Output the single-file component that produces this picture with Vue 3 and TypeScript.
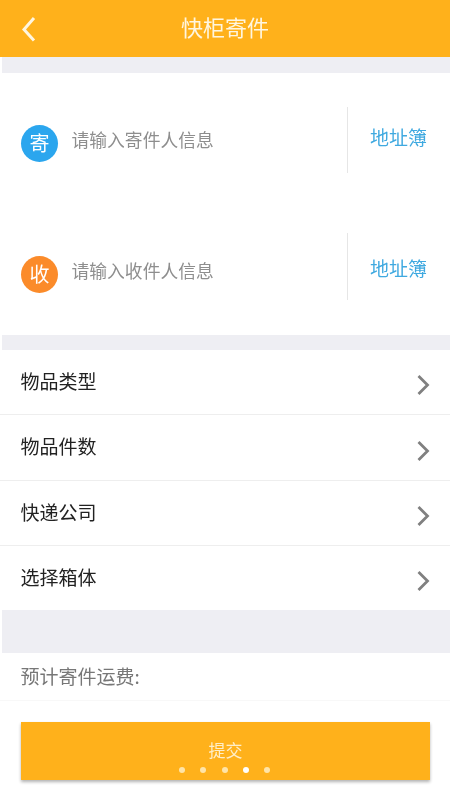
<script setup lang="ts">
const rows: string[] = ['物品类型', '物品件数', '快递公司', '选择箱体']
const dots: number[] = [0, 1, 2, 3, 4]
</script>

<template>
  <div class="page">
    <header class="bar">
      <svg class="back" width="18" height="28" viewBox="0 0 18 28">
        <path d="M14 3 L4 14.5 L14 25.5" fill="none" stroke="#fff6e0" stroke-width="3" />
      </svg>
      <span class="title">快柜寄件</span>
    </header>
    <div class="gap g1"></div>
    <section class="contacts">
      <div class="contact first">
        <span class="badge blue">寄</span>
        <span class="hint">请输入寄件人信息</span>
        <span class="book">地址簿</span>
      </div>
      <div class="contact second">
        <span class="badge orange">收</span>
        <span class="hint">请输入收件人信息</span>
        <span class="book">地址簿</span>
      </div>
    </section>
    <div class="gap g2"></div>
    <section class="list">
      <div v-for="r in rows" :key="r" class="row">
        <span class="row-label">{{ r }}</span>
        <svg width="14" height="22" viewBox="0 0 14 22">
          <path d="M2.5 2 L11.5 11 L2.5 20" fill="none" stroke="#808080" stroke-width="2.8" />
        </svg>
      </div>
    </section>
    <div class="gap g3"></div>
    <div class="fee">预计寄件运费:</div>
    <div class="action">
      <div class="submit">
        <span class="submit-text">提交</span>
        <div class="dots">
          <i v-for="d in dots" :key="d" :class="{ on: d === 3 }"></i>
        </div>
      </div>
    </div>
  </div>
</template>

<style>
html, body { margin: 0; background: #fff; }
</style>

<style scoped>
.page {
  width: 450px;
  height: 800px;
  overflow: hidden;
  background: #fff;
  font-family: "Noto Sans CJK SC", "Noto Sans", sans-serif;
  filter: blur(0.4px);
}
.bar {
  height: 57px;
  box-sizing: border-box;
  padding-bottom: 5px;
  background: #ffb11b;
  display: flex;
  align-items: center;
  justify-content: center;
  position: relative;
}
.back { position: absolute; left: 20px; top: 15px; }
.title { color: #fff6e0; font-size: 22px; line-height: 30px; }
.gap { background: #eeeef3; margin-left: 2px; }
.g1 { height: 16px; }
.g2 { height: 15px; }
.g3 { height: 43px; }
.contacts { height: 262px; display: flex; flex-direction: column; }
.contact { height: 131px; display: flex; align-items: flex-start; padding-left: 21px; }
.badge {
  width: 37px;
  height: 37px;
  margin-top: 52px;
  border-radius: 50%;
  color: #fff;
  font-size: 20px;
  line-height: 36px;
  text-align: center;
  flex: none;
}
.blue { background: #2ba6ee; }
.orange { background: #fb8b2a; }
.hint {
  margin: 53px 0 0 13.5px;
  font-size: 17.8px;
  line-height: 26px;
  color: #8e8e8e;
  flex: 1;
}
.book {
  width: 103px;
  box-sizing: border-box;
  flex: none;
  border-left: 1px solid #e6e6e6;
  padding-left: 22px;
  color: #3fa9e0;
  font-size: 19px;
  white-space: nowrap;
}
.first .book { margin-top: 34px; height: 66px; line-height: 60px; }
.second .book { margin-top: 29px; height: 67px; line-height: 70px; }
.row {
  height: 65px;
  box-sizing: border-box;
  border-bottom: 1px solid #eeeeee;
  padding: 0 20px 0 20.5px;
  display: flex;
  align-items: center;
  justify-content: space-between;
  font-size: 19px;
  color: #222;
}
.row:nth-child(2) { height: 66px; }
.row:last-child { border-bottom: none; height: 64px; }
.row-label { margin-bottom: 4px; }
.row svg { margin-top: 6px; }
.fee {
  height: 47px;
  line-height: 46px;
  padding-left: 20.5px;
  font-size: 19px;
  color: #777;
  border-bottom: 1px solid #f8f8f8;
}
.action { padding: 21px 20px 0 21px; }
.submit {
  height: 58px;
  background: #ffb11b;
  box-shadow: 0 2px 3px rgba(0, 0, 0, 0.3);
  position: relative;
  text-align: center;
}
.submit-text { color: #ffeec8; font-size: 17px; line-height: 56px; }
.dots {
  position: absolute;
  left: 158px;
  top: 45px;
  display: flex;
  gap: 15.3px;
}
.dots i {
  width: 6px;
  height: 6px;
  border-radius: 50%;
  background: #ffe4a8;
  display: block;
}
.dots i.on { background: #fff; }
</style>
